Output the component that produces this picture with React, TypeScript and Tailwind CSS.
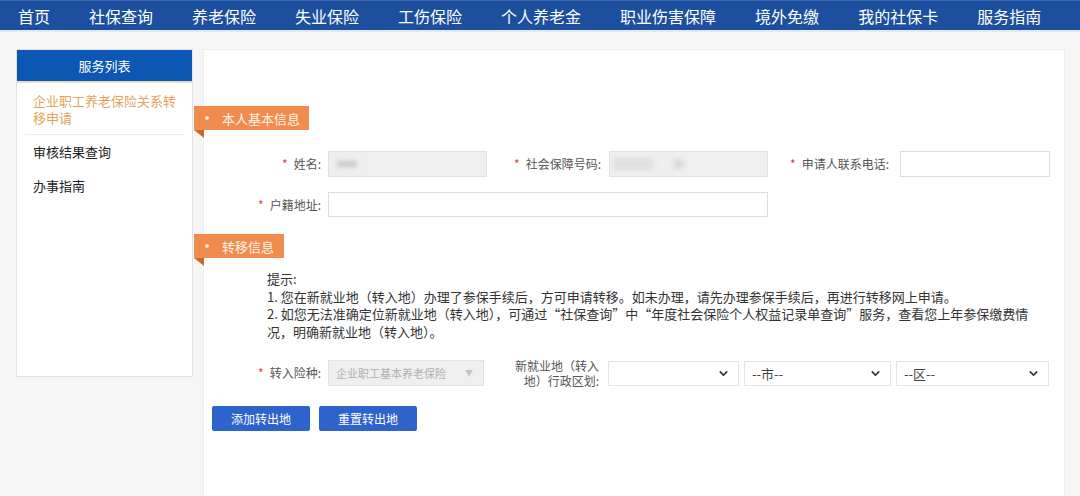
import React from 'react';
import { ChevronDown } from 'lucide-react';

const navItems = ['首页', '社保查询', '养老保险', '失业保险', '工伤保险', '个人养老金', '职业伤害保障', '境外免缴', '我的社保卡', '服务指南'];

function Tag({ title, width }: { title: string; width: string }) {
  return (
    <div className={`relative -ml-[10px] h-[24px] ${width} bg-[#f28c4e] flex items-center text-[13px] text-[#fff3ea]`}>
      <span className="ml-[11px] w-[4px] h-[4px] rounded-full bg-[#fde3d0]" />
      <span className="ml-[13px] leading-none">{title}</span>
      <span className="absolute left-0 top-[24px] w-0 h-0 border-t-[8px] border-t-[#c9692f] border-l-[10px] border-l-transparent" />
    </div>
  );
}

function Label({ text, width, twoLine }: { text: React.ReactNode; width: string; twoLine?: boolean }) {
  return (
    <div className={`${width} shrink-0 text-right text-[12px] text-[#555] ${twoLine ? 'leading-[15px]' : 'leading-none'}`}>
      {!twoLine && <span className="text-[#d0434a] mr-[6px]">*</span>}
      {text}
    </div>
  );
}

function Select({ text, width }: { text: string; width: string }) {
  return (
    <div className={`${width} h-[25px] shrink-0 border border-[#e4e4e4] bg-white flex items-center justify-between pl-[7px] pr-[8px] text-[13px] text-[#444]`}>
      <span className="leading-none">{text}</span>
      <ChevronDown className="w-[13px] h-[13px] text-[#333]" strokeWidth={3} />
    </div>
  );
}

export default function App() {
  return (
    <div className="h-[496px] overflow-hidden bg-[#f6f6f7] font-['Noto_Sans_CJK_SC','Noto_Sans',sans-serif]">
      <div className="h-[29px] bg-[#1c4f9e] border-t border-t-[#3c68b0] border-b-2 border-b-[#e3e9f1] flex items-center pl-[18px] gap-[39px] box-content">
        {navItems.map(item => (
          <span key={item} className="text-[16px] leading-none text-white whitespace-nowrap">{item}</span>
        ))}
      </div>

      <div className="flex pl-[16px] pt-[17px]">
        {/* 左侧服务列表 */}
        <div className="w-[177px] h-[328px] shrink-0 bg-white border border-[#e2e2e2]">
          <div className="h-[33px] bg-[#0b57b3] border-b-2 border-b-[#f1d9b8] flex items-center justify-center text-[13px] text-white">
            服务列表
          </div>
          <div className="px-[8px]">
            <div className="pl-[8px] pr-[4px] pt-[9px] pb-[8px] text-[13px] leading-[17px] text-[#e3a35c] border-b border-b-[#eeeeee]">
              企业职工养老保险关系转移申请
            </div>
            <div className="pl-[8px] h-[34px] flex items-center text-[13px] text-[#222]">审核结果查询</div>
            <div className="pl-[8px] h-[34px] flex items-center text-[13px] text-[#222]">办事指南</div>
          </div>
        </div>

        {/* 主表单 */}
        <div className="ml-[10px] w-[862px] min-h-[470px] bg-white border border-[#ececec] pt-[56px]">
          <Tag title="本人基本信息" width="w-[115px]" />

          <div className="mt-[21px] flex items-center">
            <Label text="姓名:" width="w-[117px]" />
            <div className="ml-[7px] w-[159px] h-[26px] bg-[#efefef] border border-[#e2e2e2] flex items-center pl-[8px]">
              <span className="w-[20px] h-[6px] bg-[#c9c9c9] blur-[2px]" />
            </div>
            <Label text="社会保障号码:" width="w-[114px]" />
            <div className="ml-[8px] w-[159px] h-[26px] bg-[#efefef] border border-[#e2e2e2] flex items-center pl-[4px] gap-[20px]">
              <span className="w-[40px] h-[12px] bg-[#e0e0e0] blur-[2px]" />
              <span className="w-[10px] h-[8px] bg-[#d8d8d8] blur-[2px]" />
            </div>
            <Label text="申请人联系电话:" width="w-[121px]" />
            <div className="ml-[11px] w-[150px] h-[26px] bg-white border border-[#dddddd]" />
          </div>

          <div className="mt-[15px] flex items-center">
            <Label text="户籍地址:" width="w-[117px]" />
            <div className="ml-[7px] w-[440px] h-[25px] bg-white border border-[#dddddd]" />
          </div>

          <div className="mt-[17px]">
            <Tag title="转移信息" width="w-[90px]" />
          </div>

          <div className="mt-[12px] ml-[63px] text-[13px] leading-[17.5px] text-[#333] whitespace-nowrap">
            提示:
            <br />
            1. 您在新就业地（转入地）办理了参保手续后，方可申请转移。如未办理，请先办理参保手续后，再进行转移网上申请。
            <br />
            2. 如您无法准确定位新就业地（转入地），可通过“社保查询”中“年度社会保险个人权益记录单查询”服务，查看您上年参保缴费情
            <br />
            况，明确新就业地（转入地）。
          </div>

          <div className="mt-[18px] flex items-center">
            <Label text="转入险种:" width="w-[117px]" />
            <div className="ml-[7px] w-[156px] h-[26px] shrink-0 bg-[#efefef] border border-[#e2e2e2] flex items-center justify-between pl-[7px] pr-[10px]">
              <span className="text-[11px] leading-none text-[#b0b0b0]">企业职工基本养老保险</span>
              <span className="text-[8px] leading-none text-[#c4c4c4]">▼</span>
            </div>
            <div className="ml-[29px]">
              <Label twoLine text={<>新就业地（转入<br />地）行政区划:</>} width="w-[86px]" />
            </div>
            <div className="ml-[9px]"><Select text="" width="w-[131px]" /></div>
            <div className="ml-[5px]"><Select text="--市--" width="w-[147px]" /></div>
            <div className="ml-[5px]"><Select text="--区--" width="w-[153px]" /></div>
          </div>

          <div className="mt-[18px] ml-[8px] flex gap-[9px]">
            <button className="w-[98px] h-[25px] bg-[#2e63cc] rounded-[2px] text-[12px] text-white">添加转出地</button>
            <button className="w-[98px] h-[25px] bg-[#2e63cc] rounded-[2px] text-[12px] text-white">重置转出地</button>
          </div>
        </div>
      </div>
    </div>
  );
}
